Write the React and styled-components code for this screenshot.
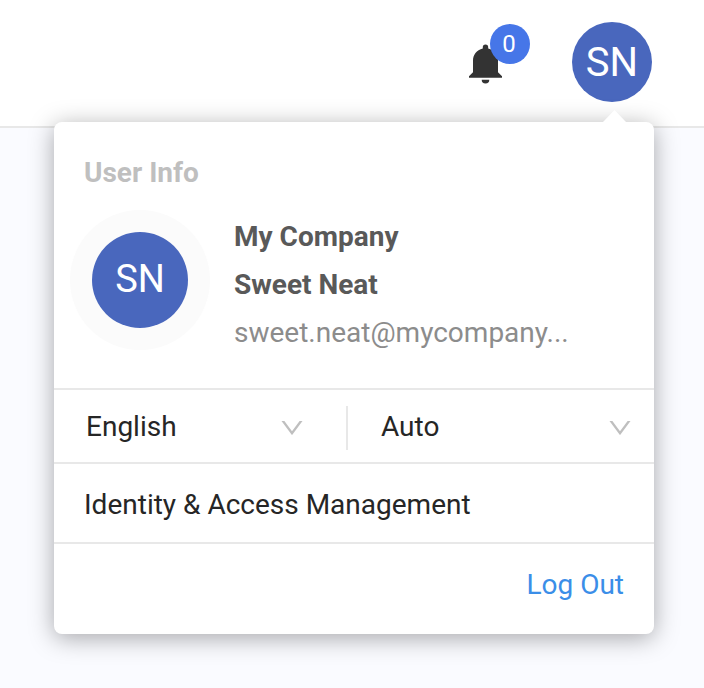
import React from 'react';
import styled, { createGlobalStyle } from 'styled-components';

const GlobalStyle = createGlobalStyle`
  *, *::before, *::after { box-sizing: border-box; }
  html, body { margin: 0; }
  body { font-family: Roboto, sans-serif; background: #fafbff; overflow: hidden; -webkit-font-smoothing: antialiased; }
`;

const Page = styled.div`
  height: 688px;
  background: #fafbff;
`;

const Header = styled.header`
  height: 128px;
  padding: 22px 52px 0 0;
  display: flex;
  justify-content: flex-end;
  gap: 69px;
  background: #fff;
  border-bottom: 2px solid #e8e8e8;
`;

const Bell = styled.button`
  position: relative;
  width: 34px;
  height: 40px;
  margin-top: 22px;
  padding: 0;
  border: 0;
  background: none;
  color: #333;
  svg { display: block; }
`;

const Badge = styled.span`
  position: absolute;
  left: 21px;
  top: -20px;
  width: 40px;
  height: 40px;
  border-radius: 50%;
  background: #4676e8;
  color: #fff;
  font: 24px/40px Roboto, sans-serif;
  text-align: center;
  text-indent: -2px;
`;

const Avatar = styled.div`
  width: ${(p) => p.$size}px;
  height: ${(p) => p.$size}px;
  border-radius: 50%;
  background: #4967bd;
  color: #fff;
  font-size: ${(p) => p.$font}px;
  line-height: ${(p) => p.$line}px;
  text-align: center;
`;

const Popover = styled.section`
  position: absolute;
  left: 54px;
  top: 122px;
  width: 600px;
  height: 512px;
  border-radius: 8px;
  background: #fff;
  box-shadow: 0 4px 24px rgba(0, 0, 0, 0.34);
`;

const Arrow = styled.svg`
  position: absolute;
  left: 549px;
  top: -12px;
`;

const UserInfo = styled.div`
  height: 268px;
  padding: 35px 16px 0;
  border-bottom: 2px solid #e8e8e8;
`;

const Title = styled.h2`
  margin: 0 0 21px 14px;
  font-size: 28px;
  line-height: 32px;
  font-weight: 700;
  color: #bfbfbf;
`;

const Profile = styled.div`
  display: flex;
  gap: 24px;
`;

const AvatarRing = styled.div`
  width: 140px;
  height: 140px;
  border-radius: 50%;
  background: #fbfbfb;
  display: grid;
  place-items: center;
`;

const Details = styled.div`
  padding-top: 3px;
  font-size: 28px;
  line-height: 48px;
`;

const Name = styled.div`
  font-weight: 700;
  color: #595959;
`;

const Email = styled.div`
  color: #8c8c8c;
`;

const Preferences = styled.div`
  height: 74px;
  padding-top: 16px;
  display: flex;
  align-items: flex-start;
  border-bottom: 2px solid #e8e8e8;
`;

const Select = styled.button`
  width: ${(p) => p.$width}px;
  height: 44px;
  padding: 0 ${(p) => p.$right}px 0 ${(p) => p.$left}px;
  display: flex;
  align-items: center;
  justify-content: space-between;
  border: 0;
  border-right: ${(p) => (p.$divided ? '2px solid #e8e8e8' : '0')};
  background: none;
  color: #262626;
  font: 28px/42px Roboto, sans-serif;
`;

const Label = styled.span`
  height: 44px;
`;

const MenuLink = styled.a`
  display: block;
  height: 80px;
  padding-left: 30px;
  border-bottom: 2px solid #e8e8e8;
  font-size: 28px;
  line-height: 82px;
  color: #262626;
`;

const Logout = styled.a`
  display: block;
  padding-right: 30px;
  text-align: right;
  font-size: 28px;
  line-height: 82px;
  color: #3b8ee8;
`;

const Chevron = () => (
  <svg width="22" height="14" viewBox="0 0 22 14" fill="#bfbfbf">
    <path d="M0.500 0H3.400L11 10.200L18.600 0H21.500L11.500 13.600Q11 14.200 10.500 13.600Z" />
  </svg>
);

export default function App() {
  return (
    <Page>
      <GlobalStyle />
      <Header>
        <Bell aria-label="Notifications">
          <svg width="34" height="40" viewBox="0 0 34 40" fill="currentColor">
            <path d="M16.500 0.500a2.700 2.700 0 0 0-2.700 2.700v1.200C7.500 6 4 10.800 4 16.500V28.300L0 32.300v1.500h33V32.300l-4-4V16.500C29 10.800 25.500 6 19.200 4.400v-1.200A2.700 2.700 0 0 0 16.500 0.500ZM12.700 35.700a3.800 3.800 0 0 0 7.600 0Z" />
          </svg>
          <Badge>0</Badge>
        </Bell>
        <Avatar $size={80} $font={40} $line={82}>SN</Avatar>
      </Header>
      <Popover>
        <Arrow width="24" height="12" viewBox="0 0 24 12"><path d="M0 12L11.500 0L23 12Z" fill="#fff" /></Arrow>
        <UserInfo>
          <Title>User Info</Title>
          <Profile>
            <AvatarRing><Avatar $size={96} $font={38} $line={94}>SN</Avatar></AvatarRing>
            <Details>
              <Name>My Company</Name>
              <Name>Sweet Neat</Name>
              <Email>sweet.neat@mycompany...</Email>
            </Details>
          </Profile>
        </UserInfo>
        <Preferences>
          <Select $width={294} $left={32} $right={43} $divided><Label>English</Label><Chevron /></Select>
          <Select $width={306} $left={33} $right={23}><Label>Auto</Label><Chevron /></Select>
        </Preferences>
        <MenuLink>Identity &amp; Access Management</MenuLink>
        <Logout>Log Out</Logout>
      </Popover>
    </Page>
  );
}
